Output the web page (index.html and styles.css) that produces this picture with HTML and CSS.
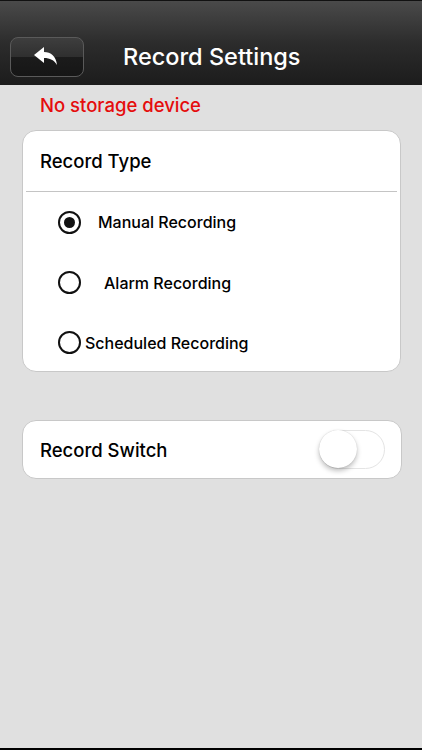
FILE: index.html
```html
<!DOCTYPE html>
<html lang="en">
<head>
	<meta charset="UTF-8">
	<meta name="viewport" content="width=device-width, initial-scale=1.0">
	<title>Record Settings</title>
	<link rel="stylesheet" href="styles.css">
</head>
<body>
	<div class="screen">
		<header class="navbar">
			<button class="back-btn" aria-label="Back">
				<svg width="26" height="22" viewBox="0 0 26 22">
					<path d="M1 9 L11 1 L11 6 C18 6 23 10 24 19 C21 14 17 12 11 12 L11 17 Z" fill="#fff"/>
				</svg>
			</button>
			<h1 class="title">Record Settings</h1>
		</header>

		<main class="content">
			<p class="warning">No storage device</p>

			<section class="card">
				<div class="card-head">Record Type</div>
				<div class="options">
					<label class="option">
						<span class="radio checked"></span>
						<span class="opt-text manual">Manual Recording</span>
					</label>
					<label class="option">
						<span class="radio"></span>
						<span class="opt-text alarm">Alarm Recording</span>
					</label>
					<label class="option">
						<span class="radio"></span>
						<span class="opt-text sched">Scheduled Recording</span>
					</label>
				</div>
			</section>

			<section class="card switch-card">
				<span class="switch-label">Record Switch</span>
				<span class="toggle"><span class="knob"></span></span>
			</section>
		</main>
	</div>
</body>
</html>
```

FILE: styles.css
```css
*,
*::before,
*::after {
	box-sizing: border-box;
}

html, body {
	margin: 0;
	width: 422px;
	height: 750px;
	font-family: Inter, Roboto, "Liberation Sans", Arial, sans-serif;
	background: #000;
}

.screen {
	height: 748px;
	background: #e0e0e0;
	display: flex;
	flex-direction: column;
}

.navbar {
	height: 85px;
	background: linear-gradient(#4a4a4a 0%, #2c2c2c 50%, #1c1c1c 100%);
	border-top: 1px solid #111;
	display: flex;
	align-items: flex-end;
	padding: 0 0 8px 10px;
}

.back-btn {
	width: 74px;
	height: 40px;
	border: 1.5px solid #5a5a5a;
	border-radius: 8px;
	background: linear-gradient(#3e3e3e 0%, #2f2f2f 50%, #1b1b1b 51%, #161616 100%);
	display: flex;
	align-items: center;
	justify-content: center;
	padding: 0;
	cursor: pointer;
}

.back-btn svg {
	margin-left: -2px;
}

.title {
	margin: 0 0 7px 39px;
	color: #fff;
	font-size: 23.5px;
	font-weight: 500;
	line-height: 26px;
}

.content {
	padding: 0 21px 0 22px;
}

.warning {
	margin: 9px 0 14px 18px;
	color: #e50d0d;
	font-size: 18.5px;
	font-weight: 500;
	line-height: 22px;
}

.card {
	background: #fff;
	border: 1px solid #c8c8c8;
	border-radius: 14px;
}

.card-head {
	height: 61px;
	display: flex;
	align-items: center;
	font-size: 18.5px;
	font-weight: 500;
	color: #000;
	border-bottom: 1px solid #c4c4c4;
	margin: 0 3px;
	padding-left: 14px;
}

.options {
	padding: 0 0 0 35px;
}

.option {
	height: 61px;
	display: flex;
	align-items: center;
	font-size: 16px;
	font-weight: 500;
	color: #000;
}

.option:first-child {
	height: 60px;
}

.option:last-child {
	height: 58px;
	padding-top: 1px;
}

.radio {
	width: 23px;
	height: 23px;
	border: 2.5px solid #111;
	border-radius: 50%;
	display: flex;
	align-items: center;
	justify-content: center;
	flex: none;
}

.radio.checked::after {
	content: "";
	width: 11px;
	height: 11px;
	border-radius: 50%;
	background: #111;
}

.manual { margin-left: 17px; }
.alarm { margin-left: 23px; }
.sched { margin-left: 4px; }

.switch-card {
	margin-top: 48px;
	height: 59px;
	display: flex;
	align-items: center;
	justify-content: space-between;
	padding: 0 16px 0 17px;
	margin-right: -1px;
}

.switch-label {
	font-size: 18.5px;
	font-weight: 500;
	color: #000;
}

.toggle {
	width: 66px;
	height: 39px;
	border: 1.5px solid #e4e4e4;
	border-radius: 20px;
	background: #fff;
	position: relative;
}

.knob {
	position: absolute;
	left: -1px;
	top: -1px;
	width: 38px;
	height: 38px;
	border-radius: 50%;
	background: #fff;
	box-shadow: 0 3px 5px rgba(0, 0, 0, 0.25), 0 0 1px rgba(0, 0, 0, 0.2);
}
```
